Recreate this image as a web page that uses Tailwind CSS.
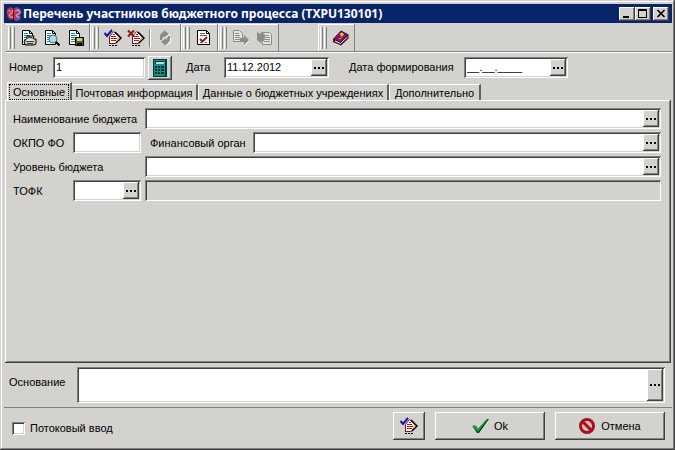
<!DOCTYPE html>
<html lang="ru">
<head>
  <meta charset="UTF-8">
  <meta name="viewport" content="width=device-width, initial-scale=1.0">
  <title>Перечень участников бюджетного процесса</title>
  <script src="https://cdn.jsdelivr.net/npm/@tailwindcss/browser@4"></script>
</head>
<body class="bg-[#d3d2ce] text-black text-[11px] leading-4 font-['Liberation_Sans',sans-serif]">

  <!-- Shared icon shapes -->
  <svg class="hidden">
    <symbol id="i-dots" viewBox="0 0 10 2"><path d="M0 0h2v2H0zM4 0h2v2H4zM8 0h2v2H8z" shape-rendering="crispEdges"/></symbol>
    <symbol id="i-page" viewBox="0 0 16 16">
      <path d="M1.500 .5h7l3 3v11h-10z" fill="#fff" stroke="#000"/>
      <path d="M8.500 .5v3h3" fill="none" stroke="#000"/>
      <path d="M3 3.500h4M3 5.500h6M3 7.500h6M3 9.500h5M3 11.500h4" stroke="#18848c"/>
    </symbol>
    <symbol id="i-sign" viewBox="0 0 18 18">
      <path d="M5.500 7.500L9.500 2.500L15.500 8L11.500 14.500h-6z" fill="#fff" stroke="#7a1420"/>
      <path d="M7 7.500h5M7 9.500h6M7 11.500h5M9 5.500h2" stroke="#b4141c"/>
      <path d="M11 3l6 6-5 5" fill="none" stroke="#000" stroke-width="1.500"/>
      <path d="M13.500 7l2 2-2 3z" fill="#e8c878"/>
      <path d="M5 16.500h8" stroke="#000" stroke-dasharray="2 1"/>
      <path d="M5.500 8v7" stroke="#7a1420"/>
    </symbol>
    <symbol id="i-check" viewBox="0 0 18 18">
      <use href="#i-sign" width="18" height="18"/>
      <path d="M.5 4l2.500 3L8 1" fill="none" stroke="#1414a8" stroke-width="2"/>
    </symbol>
  </svg>

  <div class="min-h-screen flex flex-col p-1 pr-[3px] pb-[3px] shadow-[inset_-1px_-1px_#404040,inset_1px_1px_#d3d2ce,inset_-2px_-2px_#808080,inset_2px_2px_#fff]">

    <!-- Title bar -->
    <header class="h-[19px] flex items-center bg-[#0a246a] text-white pl-[2px] pr-[3px]">
      <svg class="w-[17px] h-4" viewBox="0 0 16 16">
        <path d="M1 3l3-2 3 2 3-2 4 2 1 4-2 3 1 3-4 2-3-2-3 1-3-3V9L0 6z" fill="#c83450"/>
        <path d="M9 2l4 1 2 4-3 1-3-2zM9 9l5 1-1 4-4 1z" fill="#7c4a9c"/>
        <path d="M2 5c2-2 5-1 4 1S2 8 3 10s4 1 4 1M9 5c3-2 5 0 4 2s-4 1-3 3 3 1 3 1" fill="none" stroke="#f8d0d0"/>
        <path d="M7 3v10M3 3l2 1M4 13h2" stroke="#501428"/>
      </svg>
      <h1 class="flex-1 whitespace-nowrap text-[12px] font-bold font-['Noto_Sans',sans-serif]">Перечень участников бюджетного процесса (TXPU130101)</h1>
      <div class="flex">
        <button aria-label="Свернуть" class="w-4 h-[14px] bg-[#d3d2ce] shadow-[inset_-1px_-1px_#404040,inset_1px_1px_#fff,inset_-2px_-2px_#808080]"><svg class="w-4 h-[14px]" viewBox="0 0 16 14"><path d="M4 9h6v2H4z"/></svg></button>
        <button aria-label="Развернуть" class="w-4 h-[14px] bg-[#d3d2ce] shadow-[inset_-1px_-1px_#404040,inset_1px_1px_#fff,inset_-2px_-2px_#808080]"><svg class="w-4 h-[14px]" viewBox="0 0 16 14"><path d="M3 2h9v9H3zM4 4v6h7V4z" fill-rule="evenodd"/></svg></button>
        <button aria-label="Закрыть" class="ml-[2px] w-4 h-[14px] bg-[#d3d2ce] shadow-[inset_-1px_-1px_#404040,inset_1px_1px_#fff,inset_-2px_-2px_#808080]"><svg class="w-4 h-[14px]" viewBox="0 0 16 14"><path d="M4.500 3l7 7M11.500 3l-7 7" stroke="#000" stroke-width="1.700"/></svg></button>
      </div>
    </header>

    <!-- Toolbar -->
    <div class="flex h-[28px] mt-px ml-[2px] border-b border-[#808080] shadow-[0_1px_#fff]">
      <div class="w-[84px] flex items-center border-r border-[#808080] shadow-[inset_0_1px_#fff,1px_0_#fff]">
        <span class="mx-[2px] w-[7px] h-[22px] bg-[repeating-linear-gradient(90deg,#fff_0_1px,#d3d2ce_1px_2px,#808080_2px_3px,#d3d2ce_3px_4px)]"></span>
        <button aria-label="Печать" class="w-[23px] h-6 grid place-items-center">
          <svg class="w-4 h-4" viewBox="0 0 16 16"><use href="#i-page"/><path d="M6 6h7l-1 3h3v5l-2 1H4l-1-4 3-2z" fill="#c8c8b4" stroke="#000"/><path d="M7 7.500h4M5 11.500h8M6 13.500h6" stroke="#404040"/><path d="M5 10h8" stroke="#fff"/></svg>
        </button>
        <button aria-label="Просмотр" class="w-6 h-6 grid place-items-center">
          <svg class="w-4 h-4" viewBox="0 0 16 16"><use href="#i-page"/><circle cx="9" cy="9" r="4" fill="#a8dce8" stroke="#4c6c7c"/><path d="M12 12l3.500 3.500" stroke="#000" stroke-width="2"/></svg>
        </button>
        <button aria-label="Сохранить" class="w-6 h-6 grid place-items-center">
          <svg class="w-4 h-4" viewBox="0 0 16 16"><use href="#i-page"/><path d="M7.500 7.500h8v8h-8z" fill="#606018" stroke="#000"/><path d="M9 8h5v3H9z" fill="#c8c8a8"/><path d="M9 13h5v2H9z" fill="#000"/></svg>
        </button>
      </div>
      <div class="w-[91px] flex items-center border-r border-[#808080] shadow-[inset_0_1px_#fff,1px_0_#fff]">
        <span class="mx-[2px] w-[7px] h-[22px] bg-[repeating-linear-gradient(90deg,#fff_0_1px,#d3d2ce_1px_2px,#808080_2px_3px,#d3d2ce_3px_4px)]"></span>
        <button aria-label="Подписать" class="w-[23px] h-6 grid place-items-center"><svg class="w-[18px] h-[18px]"><use href="#i-check"/></svg></button>
        <button aria-label="Снять подпись" class="w-6 h-6 grid place-items-center">
          <svg class="w-[18px] h-[18px]" viewBox="0 0 18 18"><use href="#i-sign"/><path d="M1 1.500l6 6M7 1.500l-6 6" stroke="#981018" stroke-width="2"/></svg>
        </button>
        <span class="ml-px w-[2px] h-[18px] border-l border-[#808080] bg-white"></span>
        <button aria-label="Обновить" disabled class="ml-[2px] w-6 h-6 grid place-items-center">
          <svg class="w-4 h-4" viewBox="0 0 16 16"><path d="M3 9V5l4-3V0l5 4-5 4V6L5 9zM13 7v4l-4 3v2l-5-4 5-4v2l2-3z" fill="#fff" transform="translate(1 1)"/><path d="M3 10V5l4-4V0l5 4-5 4V6L5 10zM13 6v5l-4 4v1l-5-4 5-4v2l2-4z" fill="#8c8c8a"/></svg>
        </button>
      </div>
      <div class="w-[37px] flex items-center border-r border-[#808080] shadow-[inset_0_1px_#fff,1px_0_#fff]">
        <span class="mx-[2px] w-[7px] h-[22px] bg-[repeating-linear-gradient(90deg,#fff_0_1px,#d3d2ce_1px_2px,#808080_2px_3px,#d3d2ce_3px_4px)]"></span>
        <button aria-label="Проверить" class="w-6 h-6 grid place-items-center">
          <svg class="w-4 h-4" viewBox="0 0 16 16"><path d="M1.500 .5h9l3 3v11h-12z" fill="#fff" stroke="#000"/><path d="M10.500 .5v3h3" fill="none" stroke="#000"/><path d="M4 3.500h5M4 5.500h7M4 12.500h2M9 12.500h2" stroke="#606060"/><path d="M4 9l2.500 2.500L11 7" fill="none" stroke="#98143c" stroke-width="2"/></svg>
        </button>
      </div>
      <div class="w-[61px] flex items-center border-r border-[#808080] shadow-[inset_0_1px_#fff]">
        <span class="mx-[2px] w-[7px] h-[22px] bg-[repeating-linear-gradient(90deg,#fff_0_1px,#d3d2ce_1px_2px,#808080_2px_3px,#d3d2ce_3px_4px)]"></span>
        <button aria-label="Отправить" disabled class="w-6 h-6 grid place-items-center">
          <svg class="w-4 h-4" viewBox="0 0 16 16"><path d="M.5 .5h6l3 3v8h-9z" fill="#e4e3df" stroke="#8c8c8a"/><path d="M2 3.500h4M2 5.500h5M2 7.500h5M2 9.500h5" stroke="#8c8c8a"/><path d="M7 8h4V5l5 5-5 5v-3H7z" fill="#8c8c8a"/><path d="M11.500 15.500l4.500-4.500" stroke="#fff"/></svg>
        </button>
        <button aria-label="Получить" disabled class="w-6 h-6 grid place-items-center">
          <svg class="w-4 h-4" viewBox="0 0 16 16"><path d="M5.500 2.500h7l2 2v10h-9z" fill="#e4e3df" stroke="#8c8c8a"/><path d="M7 5.500h5M7 7.500h6M7 9.500h6M7 11.500h6" stroke="#8c8c8a"/><path d="M0 2l4 2V1l4 4-1 6H4l1 3-5-4z" fill="#8c8c8a"/></svg>
        </button>
      </div>
      <div class="ml-[39px] w-[37px] flex items-center border-r border-[#808080] shadow-[inset_0_1px_#fff,inset_1px_0_#fff]">
        <span class="mx-[2px] w-[7px] h-[22px] bg-[repeating-linear-gradient(90deg,#fff_0_1px,#d3d2ce_1px_2px,#808080_2px_3px,#d3d2ce_3px_4px)]"></span>
        <button aria-label="Справка" class="w-6 h-6 grid place-items-center">
          <svg class="w-4 h-4" viewBox="0 0 16 16"><path d="M0 9L8 .5l7.500 4v4L8 15.500 0 12z" fill="#300820"/><path d="M1 9l7-7.500 6.500 3.500L7.500 12z" fill="#8c1468"/><path d="M2 11l5.500 2.500 7-6.500" fill="none" stroke="#fff"/><path d="M7 4.500l2-1 1 1-2 2M7 8v1" fill="none" stroke="#f8c830" stroke-width="1.500"/></svg>
        </button>
      </div>
    </div>

    <!-- Document number and dates -->
    <div class="flex items-start pt-1 pl-[5px] h-[30px] whitespace-nowrap">
      <label for="number" class="w-[44px] pt-[3px]">Номер</label>
      <input id="number" type="text" value="1" class="mt-px w-[92px] h-[21px] bg-white px-[3px] pb-[2px] shadow-[inset_1px_1px_#808080,inset_-1px_-1px_#fff,inset_2px_2px_#404040,inset_-2px_-2px_#d3d2ce]">
      <button aria-label="Калькулятор" class="ml-[3px] w-6 h-6 grid place-items-center shadow-[inset_-1px_-1px_#404040,inset_1px_1px_#fff,inset_-2px_-2px_#808080]">
        <svg class="w-4 h-5" viewBox="0 0 16 20" shape-rendering="crispEdges"><path d="M1 1h14v18H1z" fill="#003c3c"/><path d="M2 2h11v16H2z" fill="#188c88"/><path d="M3 3h9v3H3z" fill="#003c3c"/><path d="M4 4h8v2H4z" fill="#a4e4dc"/><path d="M3 8h2v2H3zM6 8h2v2H6zM9 8h3v2H9zM3 11h2v2H3zM6 11h2v2H6zM9 11h3v2H9zM3 14h2v2H3zM6 14h2v2H6zM9 14h3v2H9z" fill="#003030"/></svg>
      </button>
      <label for="date" class="ml-[14px] w-[38px] pt-[3px]">Дата</label>
      <div class="mt-px w-[105px] h-[21px] flex bg-white p-[2px] shadow-[inset_1px_1px_#808080,inset_-1px_-1px_#fff,inset_2px_2px_#404040,inset_-2px_-2px_#d3d2ce]">
        <input id="date" type="text" value="11.12.2012" class="flex-1 min-w-0 pl-px pb-[2px]">
        <button aria-label="Выбрать дату" class="w-4 grid place-items-center bg-[#d3d2ce] shadow-[inset_-1px_-1px_#404040,inset_1px_1px_#fff,inset_-2px_-2px_#808080]"><svg class="w-[10px] h-[2px]"><use href="#i-dots"/></svg></button>
      </div>
      <label for="formed" class="ml-[20px] w-[115px] pt-[3px]">Дата формирования</label>
      <div class="mt-px w-[104px] h-[21px] flex bg-white p-[2px] shadow-[inset_1px_1px_#808080,inset_-1px_-1px_#fff,inset_2px_2px_#404040,inset_-2px_-2px_#d3d2ce]">
        <input id="formed" type="text" value="__.__.____" class="flex-1 min-w-0 pl-px pb-[2px]">
        <button aria-label="Выбрать дату формирования" class="w-4 grid place-items-center bg-[#d3d2ce] shadow-[inset_-1px_-1px_#404040,inset_1px_1px_#fff,inset_-2px_-2px_#808080]"><svg class="w-[10px] h-[2px]"><use href="#i-dots"/></svg></button>
      </div>
    </div>

    <!-- Tabs -->
    <div role="tablist" class="flex items-end h-[18px] pl-[3px] whitespace-nowrap">
      <button role="tab" aria-selected="true" class="w-[65px] h-[18px] p-px border-t border-l border-white border-r-2 border-r-[#606060]">
        <span class="flex h-4 items-center justify-center border border-dotted border-black leading-3">Основные</span>
      </button>
      <button role="tab" class="w-[126px] h-4 border-t border-white border-r-2 border-r-[#606060]">Почтовая информация</button>
      <button role="tab" class="w-[191px] h-4 border-t border-l border-white border-r-2 border-r-[#606060]">Данные о бюджетных учреждениях</button>
      <button role="tab" class="w-[92px] h-4 border-t border-l border-white border-r-2 border-r-[#606060]">Дополнительно</button>
    </div>

    <main class="flex-1 ml-px mr-px pt-[8px] pl-[8px] pr-[10px] pb-3 flex flex-col gap-[3px] whitespace-nowrap shadow-[inset_-1px_-1px_#404040,inset_1px_1px_#fff,inset_-2px_-2px_#808080]">
      <div class="flex items-center">
        <label for="budget" class="w-[132px]">Наименование бюджета</label>
        <div class="flex-1 h-[21px] flex bg-white p-[2px] shadow-[inset_1px_1px_#808080,inset_-1px_-1px_#fff,inset_2px_2px_#404040,inset_-2px_-2px_#d3d2ce]">
          <input id="budget" type="text" class="flex-1 min-w-0 px-px">
          <button aria-label="Выбрать бюджет" class="w-4 grid place-items-center bg-[#d3d2ce] shadow-[inset_-1px_-1px_#404040,inset_1px_1px_#fff,inset_-2px_-2px_#808080]"><svg class="w-[10px] h-[2px]"><use href="#i-dots"/></svg></button>
        </div>
      </div>
      <div class="flex items-center">
        <label for="okpo" class="w-[60px]">ОКПО ФО</label>
        <input id="okpo" type="text" class="w-[68px] h-[21px] px-[3px] bg-white shadow-[inset_1px_1px_#808080,inset_-1px_-1px_#fff,inset_2px_2px_#404040,inset_-2px_-2px_#d3d2ce]">
        <label for="organ" class="ml-[9px] w-[103px]">Финансовый орган</label>
        <div class="flex-1 h-[21px] flex bg-white p-[2px] shadow-[inset_1px_1px_#808080,inset_-1px_-1px_#fff,inset_2px_2px_#404040,inset_-2px_-2px_#d3d2ce]">
          <input id="organ" type="text" class="flex-1 min-w-0 px-px">
          <button aria-label="Выбрать орган" class="w-4 grid place-items-center bg-[#d3d2ce] shadow-[inset_-1px_-1px_#404040,inset_1px_1px_#fff,inset_-2px_-2px_#808080]"><svg class="w-[10px] h-[2px]"><use href="#i-dots"/></svg></button>
        </div>
      </div>
      <div class="flex items-center">
        <label for="level" class="w-[132px]">Уровень бюджета</label>
        <div class="flex-1 h-[21px] flex bg-white p-[2px] shadow-[inset_1px_1px_#808080,inset_-1px_-1px_#fff,inset_2px_2px_#404040,inset_-2px_-2px_#d3d2ce]">
          <input id="level" type="text" class="flex-1 min-w-0 px-px">
          <button aria-label="Выбрать уровень" class="w-4 grid place-items-center bg-[#d3d2ce] shadow-[inset_-1px_-1px_#404040,inset_1px_1px_#fff,inset_-2px_-2px_#808080]"><svg class="w-[10px] h-[2px]"><use href="#i-dots"/></svg></button>
        </div>
      </div>
      <div class="flex items-center">
        <label for="tofk" class="w-[60px]">ТОФК</label>
        <div class="w-[68px] h-[21px] flex bg-white p-[2px] shadow-[inset_1px_1px_#808080,inset_-1px_-1px_#fff,inset_2px_2px_#404040,inset_-2px_-2px_#d3d2ce]">
          <input id="tofk" type="text" class="flex-1 min-w-0 px-px">
          <button aria-label="Выбрать ТОФК" class="w-4 grid place-items-center bg-[#d3d2ce] shadow-[inset_-1px_-1px_#404040,inset_1px_1px_#fff,inset_-2px_-2px_#808080]"><svg class="w-[10px] h-[2px]"><use href="#i-dots"/></svg></button>
        </div>
        <input type="text" readonly aria-label="Название ТОФК" class="ml-1 flex-1 min-w-0 h-[21px] px-[3px] shadow-[inset_1px_1px_#808080,inset_-1px_-1px_#fff,inset_2px_2px_#404040,inset_-2px_-2px_#d3d2ce]">
      </div>
    </main>

    <!-- Basis -->
    <div class="flex items-start pt-1 pb-1 pl-[5px] pr-[7px] border-b border-[#808080]">
      <label for="basis" class="w-[68px] pt-[7px]">Основание</label>
      <div class="flex-1 h-[36px] flex bg-white p-[2px] shadow-[inset_1px_1px_#808080,inset_-1px_-1px_#fff,inset_2px_2px_#404040,inset_-2px_-2px_#d3d2ce]">
        <textarea id="basis" class="flex-1 min-w-0 resize-none px-px"></textarea>
        <button aria-label="Выбрать основание" class="w-4 grid place-items-center bg-[#d3d2ce] shadow-[inset_-1px_-1px_#404040,inset_1px_1px_#fff,inset_-2px_-2px_#808080]"><svg class="w-[10px] h-[2px]"><use href="#i-dots"/></svg></button>
      </div>
    </div>

    <!-- Footer -->
    <footer class="flex items-center gap-[10px] pt-1 pb-[7px] pl-2 pr-[7px]">
      <label class="flex-1 flex items-center gap-[5px] pt-1">
        <input type="checkbox" class="appearance-none w-[13px] h-[13px] bg-white shadow-[inset_1px_1px_#808080,inset_-1px_-1px_#fff,inset_2px_2px_#404040,inset_-2px_-2px_#d3d2ce]">
        Потоковый ввод
      </label>
      <button aria-label="Подписать документ" class="w-8 h-7 grid place-items-center shadow-[inset_-1px_-1px_#404040,inset_1px_1px_#fff,inset_-2px_-2px_#808080]"><svg class="w-[18px] h-[18px]"><use href="#i-check"/></svg></button>
      <button class="w-[110px] h-7 flex items-center justify-center gap-[5px] shadow-[inset_-1px_-1px_#404040,inset_1px_1px_#fff,inset_-2px_-2px_#808080]">
        <svg class="w-[17px] h-4" viewBox="0 0 17 16"><path d="M1 9l3-1 2 3 9-10h2L7 15H5z" fill="#083c10"/><path d="M0 8l3-1 3 4 9-10h1L6 14z" fill="#18a030"/></svg>
        Ok
      </button>
      <button class="w-[110px] h-7 flex items-center justify-center gap-[6px] shadow-[inset_-1px_-1px_#404040,inset_1px_1px_#fff,inset_-2px_-2px_#808080]">
        <svg class="w-4 h-4" viewBox="0 0 16 16"><circle cx="8" cy="8" r="6.500" fill="#e8b8b8" stroke="#a01420" stroke-width="3"/><path d="M3.500 3.500l9 9" stroke="#a01420" stroke-width="3"/></svg>
        Отмена
      </button>
    </footer>
  </div>
</body>
</html>
